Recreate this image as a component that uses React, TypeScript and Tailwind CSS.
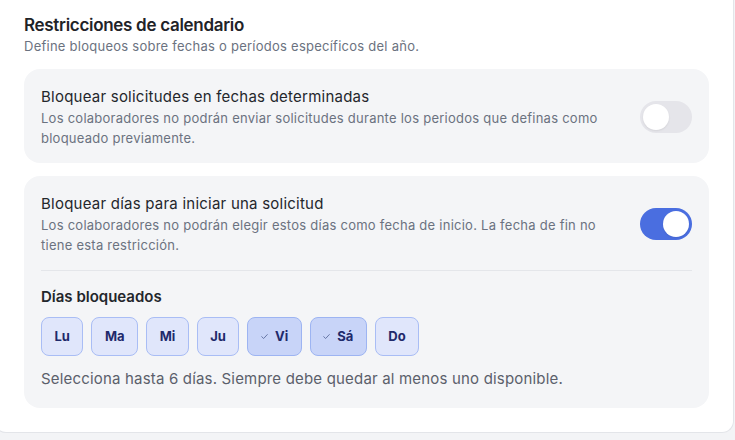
import React from "react";

const days = [
  { label: "Lu", on: false },
  { label: "Ma", on: false },
  { label: "Mi", on: false },
  { label: "Ju", on: false },
  { label: "Vi", on: true },
  { label: "Sá", on: true },
  { label: "Do", on: false },
];

function Toggle({ on }: { on: boolean }) {
  return (
    <div
      className={
        "flex h-[32px] w-[52px] shrink-0 items-center rounded-full p-[3px] " +
        (on ? "justify-end bg-[#4a6ee0]" : "justify-start bg-[#e5e5ea]")
      }
    >
      <div className="h-[26px] w-[26px] rounded-full bg-white shadow-[0_1px_2px_rgba(0,0,0,0.08)]" />
    </div>
  );
}

export default function App() {
  return (
    <div
      className="h-[440px] w-[735px] overflow-hidden bg-[#f3f4f6]"
      style={{ fontFamily: "Inter, Roboto, 'Noto Sans', Arial, sans-serif" }}
    >
      <div className="-ml-[6px] w-[740px] rounded-b-xl border-x border-b border-[#e3e5e9] bg-white pb-[24px] pl-[29px] pr-[24px] pt-[12px]">
        <h2 className="text-[17px] font-semibold leading-[26px] tracking-[-0.3px] text-[#1f2328]">
          Restricciones de calendario
        </h2>
        <p className="text-[13px] leading-[16px] tracking-[0.25px] text-[#6b7280]">
          Define bloqueos sobre fechas o períodos específicos del año.
        </p>

        <div className="mt-[15px] flex items-center gap-6 rounded-2xl bg-[#f4f5f7] pb-[15px] pl-[17px] pr-[17px] pt-[17px]">
          <div className="flex-1">
            <div className="text-[15px] leading-[22px] tracking-[0.23px] text-[#24272c]">
              Bloquear solicitudes en fechas determinadas
            </div>
            <div className="max-w-[570px] text-[13px] leading-[20px] tracking-[0.25px] text-[#6b7280]">
              Los colaboradores no podrán enviar solicitudes durante los periodos que definas como bloqueado
              previamente.
            </div>
          </div>
          <Toggle on={false} />
        </div>

        <div className="mt-[13px] rounded-2xl bg-[#f4f5f7] pb-[19px] pl-[17px] pr-[17px] pt-[17px]">
          <div className="flex items-center gap-6 border-b border-[#e4e6ea] pb-[15px]">
            <div className="flex-1">
              <div className="text-[15px] leading-[22px] tracking-[0.23px] text-[#24272c]">
                Bloquear días para iniciar una solicitud
              </div>
              <div className="max-w-[570px] text-[13px] leading-[20px] tracking-[0.25px] text-[#6b7280]">
                Los colaboradores no podrán elegir estos días como fecha de inicio. La fecha de fin no tiene esta
                restricción.
              </div>
            </div>
            <Toggle on={true} />
          </div>

          <div className="mt-[16px] text-[15px] font-semibold leading-[20px] text-[#23262b]">Días bloqueados</div>
          <div className="mt-[10px] flex gap-2">
            {days.map((d) => (
              <div
                key={d.label}
                className={
                  "flex h-[39px] items-center gap-[7px] rounded-lg border px-[12.5px] text-[13px] font-bold text-[#1f2a6b] " +
                  (d.on ? "border-[#9db4f2] bg-[#c8d4f8]" : "border-[#a9bdf5] bg-[#e0e6fb]")
                }
              >
                {d.on && (
                  <svg width="7" height="7" viewBox="0 0 8 8" fill="none">
                    <path d="M0.8 4.2 L3 6.3 L7.2 1.8" stroke="#5a6a9c" strokeWidth="1" strokeLinecap="round" strokeLinejoin="round" />
                  </svg>
                )}
                <span>{d.label}</span>
              </div>
            ))}
          </div>
          <div className="mt-[13px] text-[15px] leading-[20px] tracking-[0.18px] text-[#5b606b]">
            Selecciona hasta 6 días. Siempre debe quedar al menos uno disponible.
          </div>
        </div>
      </div>
    </div>
  );
}
